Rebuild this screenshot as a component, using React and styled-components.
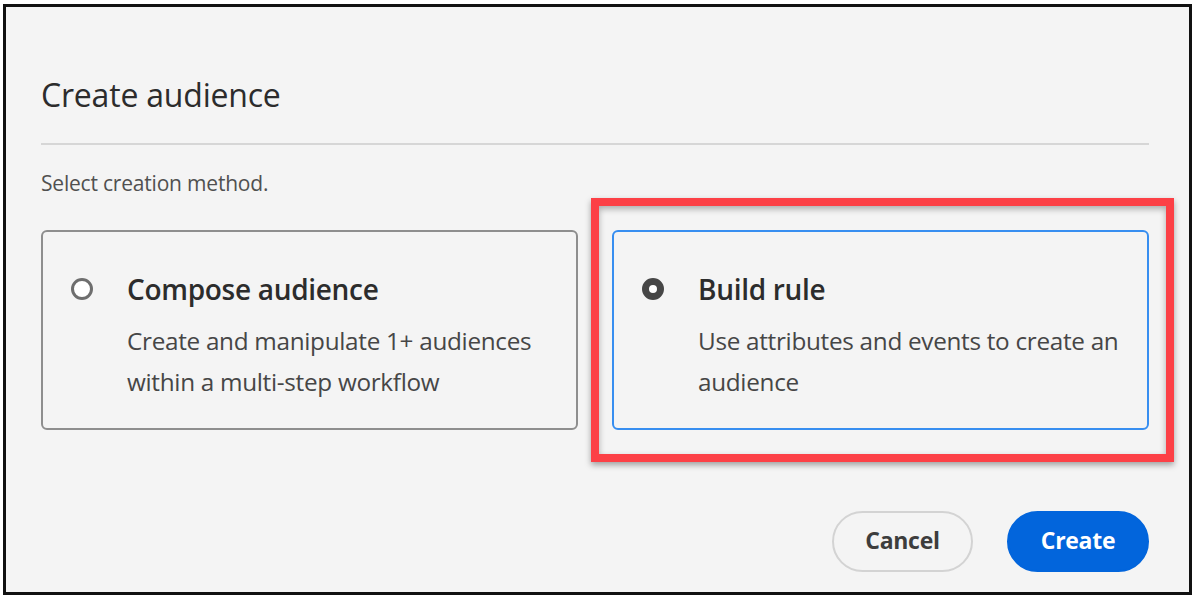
import React from "react";
import styled, { createGlobalStyle } from "styled-components";

const GlobalStyle = createGlobalStyle`
  body {
    margin: 0;
    background: #ffffff;
    font-family: "Open Sans", "Noto Sans", sans-serif;
  }
`;

const Frame = styled.div`
  box-sizing: border-box;
  margin: 4px 0 0 3px;
  width: 1189px;
  height: 591px;
  border: 3px solid #111;
  background: #f4f4f4;
  padding: 0 40px 0 35px;
  display: flex;
  flex-direction: column;
`;

const Title = styled.h2`
  margin: 0;
  padding-top: 70px;
  font-size: 32px;
  font-weight: 400;
  line-height: 36px;
  color: #2c2c2c;
  letter-spacing: -0.2px;
`;

const Divider = styled.hr`
  margin: 30px 0 0;
  border: none;
  height: 2px;
  background: #d6d6d6;
`;

const Hint = styled.p`
  margin: 25px 0 0;
  font-size: 21px;
  line-height: 26px;
  color: #505050;
  letter-spacing: -0.2px;
`;

const Options = styled.div`
  display: grid;
  grid-template-columns: 1fr 1fr;
  gap: 34px;
  margin-top: 34px;
`;

const Card = styled.div`
  position: relative;
  box-sizing: border-box;
  height: 200px;
  border: 2px solid ${(p) => (p.$selected ? "#378ef0" : "#8e8e8e")};
  border-radius: 6px;
  padding: 40px 20px 0 28px;
  display: flex;
  gap: 34px;
`;

const Radio = styled.span`
  flex: none;
  box-sizing: border-box;
  width: 22px;
  height: 22px;
  margin-top: 6px;
  border-radius: 50%;
  border: ${(p) => (p.$checked ? "7px solid #464646" : "3px solid #6e6e6e")};
  background: #fff;
`;

const CardText = styled.div`
  display: flex;
  flex-direction: column;
`;

const CardTitle = styled.div`
  font-size: 28px;
  font-weight: 600;
  line-height: 34px;
  color: #2c2c2c;
  letter-spacing: -0.3px;
`;

const CardDesc = styled.div`
  margin-top: 14px;
  font-size: 24.3px;
  line-height: 41px;
  color: #464646;
  letter-spacing: -0.3px;
`;

const Highlight = styled.div`
  position: absolute;
  left: -23px;
  top: -34px;
  right: -27px;
  bottom: -34px;
  border: 8px solid #fc4046;
  box-shadow: 0 3px 6px rgba(0, 0, 0, 0.35), inset 0 3px 6px rgba(0, 0, 0, 0.3);
  pointer-events: none;
`;

const Footer = styled.div`
  display: flex;
  justify-content: flex-end;
  gap: 34px;
  margin-top: 81px;
`;

const Button = styled.button`
  box-sizing: border-box;
  height: 61px;
  width: ${(p) => p.$width}px;
  border-radius: 31px;
  padding: 0 0 3px;
  font-family: "Open Sans", "Noto Sans", sans-serif;
  font-size: 23px;
  font-weight: 700;
  letter-spacing: -0.3px;
  border: 2px solid ${(p) => (p.$primary ? "#0265dc" : "#d3d3d3")};
  background: ${(p) => (p.$primary ? "#0265dc" : "transparent")};
  color: ${(p) => (p.$primary ? "#ffffff" : "#3d3d3d")};
  cursor: pointer;
`;

const options = [
  {
    title: "Compose audience",
    desc: ["Create and manipulate 1+ audiences", "within a multi-step workflow"],
  },
  {
    title: "Build rule",
    desc: ["Use attributes and events to create an", "audience"],
    selected: true,
  },
];

export default function App() {
  return (
    <>
      <GlobalStyle />
      <Frame>
        <Title>Create audience</Title>
        <Divider />
        <Hint>Select creation method.</Hint>
        <Options>
          {options.map((o) => (
            <Card key={o.title} $selected={o.selected}>
              <Radio $checked={o.selected} />
              <CardText>
                <CardTitle>{o.title}</CardTitle>
                <CardDesc>
                  {o.desc.map((line) => (
                    <div key={line}>{line}</div>
                  ))}
                </CardDesc>
              </CardText>
              {o.selected && <Highlight />}
            </Card>
          ))}
        </Options>
        <Footer>
          <Button $width={141}>Cancel</Button>
          <Button $width={142} $primary>
            Create
          </Button>
        </Footer>
      </Frame>
    </>
  );
}
